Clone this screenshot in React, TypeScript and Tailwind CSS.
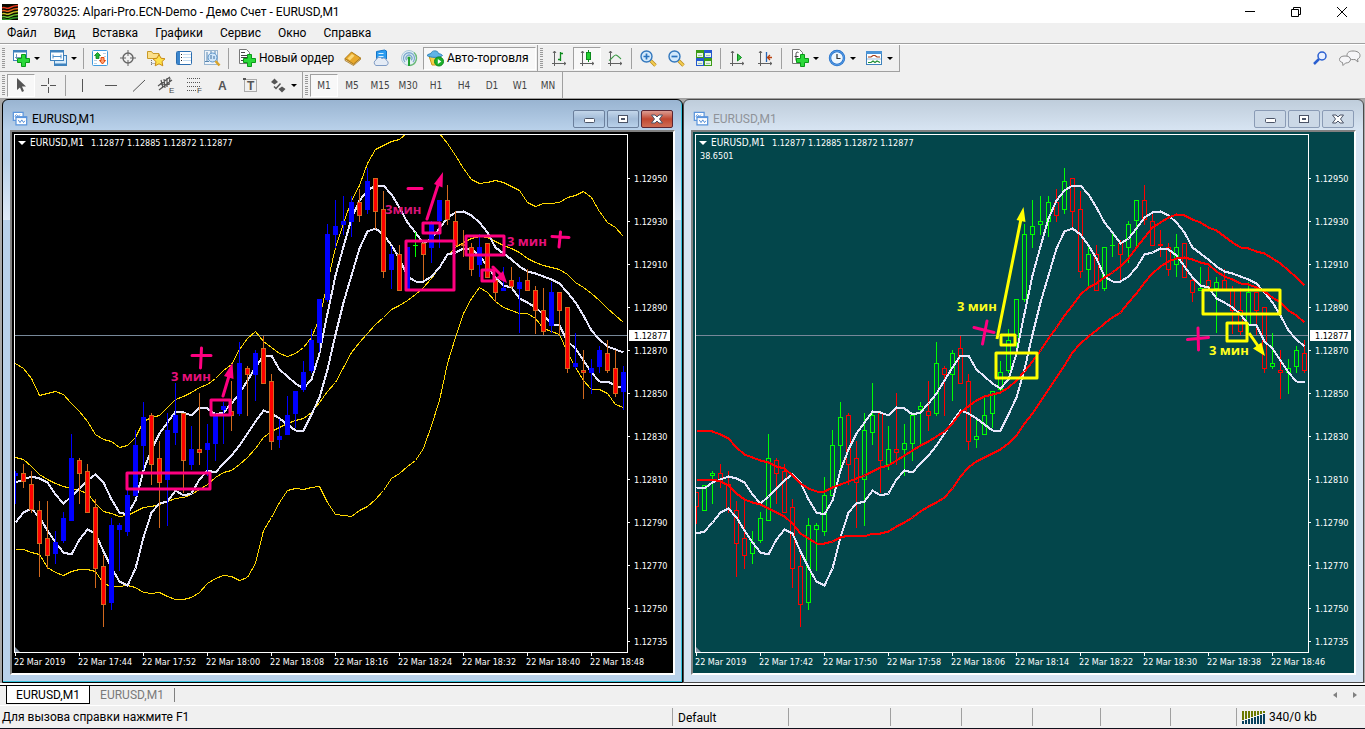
import type { ReactNode } from "react";
import clsx from "clsx";

const UI_FONT = "font-['Roboto','Open_Sans',sans-serif]";
const CHART_FONT = "font-['DejaVu_Sans_Condensed','Open_Sans',sans-serif]";

/* ---------- chart data ---------- */

type Dir = "u" | "d" | "n";
type Candle = [high: number, top: number, bottom: number, low: number, dir: Dir];

// Levels are rows of the terminal window, the canvas begins at row TOP
const TOP = 132;
const STEP = 8;

const OLDER: Candle[] = [
  [492, 492, 507, 524, "d"], [485, 485, 511, 511, "u"],
];

const CANDLES: Candle[] = [
  [471, 473, 476, 504, "u"], [464, 473, 482, 488, "d"], [471, 484, 510, 513, "d"], [501, 510, 544, 577, "d"],
  [501, 538, 556, 569, "d"], [531, 542, 554, 564, "u"], [512, 518, 541, 543, "u"], [434, 458, 521, 521, "u"],
  [458, 460, 474, 504, "d"], [464, 471, 513, 513, "d"], [499, 507, 569, 588, "d"], [555, 566, 605, 627, "d"],
  [518, 525, 603, 610, "u"], [523, 525, 530, 571, "u"], [477, 495, 532, 536, "u"], [430, 445, 496, 496, "u"],
  [402, 417, 446, 470, "u"], [413, 415, 465, 485, "d"], [441, 458, 483, 528, "d"], [413, 430, 480, 526, "u"],
  [383, 415, 433, 445, "u"], [413, 413, 461, 493, "d"], [426, 449, 465, 470, "u"], [393, 449, 453, 465, "d"],
  [424, 443, 450, 476, "u"], [413, 415, 444, 461, "u"], [402, 406, 410, 444, "u"], [381, 411, 416, 431, "d"],
  [342, 363, 414, 416, "u"], [366, 368, 375, 416, "d"], [350, 353, 375, 401, "u"], [336, 348, 384, 384, "d"],
  [374, 381, 442, 450, "d"], [419, 436, 440, 448, "u"], [396, 415, 435, 435, "u"], [391, 391, 414, 428, "u"],
  [361, 372, 390, 392, "u"], [329, 340, 371, 373, "u"], [299, 299, 343, 352, "u"], [224, 234, 300, 302, "u"],
  [200, 226, 235, 248, "u"], [196, 221, 225, 235, "u"], [196, 202, 222, 237, "u"], [189, 202, 216, 222, "d"],
  [168, 181, 210, 214, "u"], [178, 178, 212, 229, "d"], [191, 209, 272, 278, "d"], [246, 254, 270, 289, "u"],
  [245, 254, 291, 291, "d"], [247, 247, 289, 291, "u"], [232, 245, 246, 257, "n"], [240, 243, 255, 280, "d"],
  [221, 224, 248, 263, "u"], [200, 200, 221, 248, "u"], [185, 200, 220, 225, "d"], [211, 221, 246, 246, "d"],
  [230, 244, 246, 257, "d"], [243, 247, 270, 276, "d"], [234, 247, 265, 277, "u"], [243, 243, 278, 278, "d"],
  [278, 280, 293, 302, "d"], [267, 288, 291, 291, "u"], [267, 280, 287, 289, "d"], [277, 282, 289, 333, "u"],
  [269, 280, 291, 291, "d"], [286, 290, 311, 334, "d"], [288, 310, 332, 335, "d"], [282, 292, 326, 333, "u"],
  [292, 292, 311, 335, "d"], [307, 307, 369, 373, "d"], [333, 363, 367, 369, "u"], [350, 370, 373, 399, "d"],
  [359, 368, 373, 394, "u"], [346, 350, 367, 373, "u"], [340, 353, 371, 373, "d"], [350, 368, 394, 397, "d"],
  [366, 372, 392, 410, "u"],
];

const MA_HIGH_OLDER = [487, 488];
const MA_LOW_OLDER = [533, 531];

const MA_HIGH = [
  482, 479, 476, 478, 482, 494, 503, 496, 488, 480, 474, 482, 499, 512, 514, 500, 470, 449, 433, 422,
  411, 412, 415, 407, 408, 414, 412, 403, 393, 380, 367, 355, 355, 369, 376, 383, 388, 379, 353, 313,
  275, 246, 218, 200, 190, 185, 185, 194, 207, 222, 232, 243, 238, 228, 217, 212, 211, 215, 222, 232,
  247, 253, 259, 266, 271, 273, 276, 279, 283, 292, 302, 315, 330, 339, 346, 349, 352,
];

const MA_LOW = [
  522, 512, 508, 517, 530, 542, 552, 554, 539, 529, 533, 551, 567, 581, 585, 568, 537, 512, 503, 501,
  490, 495, 493, 479, 470, 472, 463, 455, 445, 433, 421, 410, 413, 418, 424, 430, 430, 414, 397, 369,
  334, 302, 275, 248, 231, 228, 234, 245, 258, 276, 281, 281, 276, 267, 254, 252, 248, 249, 255, 266,
  277, 285, 287, 298, 302, 307, 314, 324, 325, 341, 348, 360, 372, 381, 381, 385, 388,
];

const BB_UPPER = [
  363, 368, 378, 395, 393, 391, 394, 403, 411, 421, 434, 439, 441, 447, 445, 437, 421, 417, 415, 407,
  399, 396, 392, 387, 384, 378, 370, 364, 349, 338, 331, 341, 347, 353, 356, 353, 347, 337, 318, 282,
  247, 223, 200, 185, 163, 149, 145, 141, 139, 132, 126, 122, 126, 133, 143, 155, 168, 179, 183, 182,
  180, 182, 186, 190, 202, 206, 203, 203, 202, 197, 195, 191, 197, 211, 222, 227, 236,
];

const BB_MIDDLE = [
  457, 459, 466, 474, 479, 483, 486, 488, 490, 493, 503, 511, 513, 516, 515, 511, 507, 506, 504, 501,
  498, 497, 494, 489, 484, 477, 472, 470, 464, 457, 448, 437, 431, 427, 423, 420, 418, 412, 402, 391,
  382, 367, 352, 342, 333, 324, 317, 309, 305, 300, 294, 287, 278, 267, 255, 247, 242, 238, 236, 237,
  241, 245, 248, 252, 258, 262, 265, 267, 269, 274, 282, 287, 293, 300, 308, 315, 322,
];

const BB_LOWER = [
  549, 549, 552, 554, 567, 572, 575, 571, 569, 569, 571, 583, 586, 586, 585, 587, 592, 593, 592, 596,
  599, 599, 597, 592, 583, 578, 575, 576, 580, 577, 563, 530, 517, 502, 490, 488, 489, 487, 486, 502,
  514, 515, 516, 510, 506, 499, 490, 478, 473, 466, 460, 448, 425, 400, 363, 337, 313, 298, 287, 292,
  301, 307, 310, 313, 313, 318, 328, 331, 334, 352, 367, 380, 389, 389, 393, 404, 407,
];

const RED_UPPER = [
  430, 430, 431, 434, 438, 447, 454, 457, 460, 462, 466, 468, 475, 483, 488, 491, 491, 487, 484, 481,
  478, 475, 471, 467, 465, 460, 455, 450, 445, 441, 436, 431, 423, 412, 406, 400, 396, 394, 392, 387,
  380, 371, 361, 350, 338, 327, 315, 305, 294, 287, 283, 277, 272, 266, 258, 247, 237, 227, 222, 217,
  214, 215, 219, 222, 227, 230, 236, 242, 247, 248, 251, 253, 258, 263, 270, 277, 285,
];

const RED_LOWER = [
  479, 479, 479, 481, 485, 493, 499, 502, 504, 508, 512, 516, 523, 533, 538, 543, 543, 541, 537, 535,
  535, 536, 533, 533, 531, 526, 522, 517, 511, 506, 502, 497, 488, 476, 467, 461, 457, 453, 449, 443,
  435, 423, 413, 401, 389, 377, 365, 352, 343, 336, 330, 323, 317, 312, 302, 293, 282, 273, 266, 261,
  258, 257, 259, 262, 264, 271, 276, 279, 283, 284, 287, 291, 297, 302, 310, 315, 322,
];

const PRICES = [
  "1.12950", "1.12930", "1.12910", "1.12890", "1.12870", "1.12850",
  "1.12830", "1.12810", "1.12790", "1.12770", "1.12750",
];

const TIMES_LEFT = ["2019", "17:44", "17:52", "18:00", "18:08", "18:16", "18:24", "18:32", "18:40", "18:48"];
const TIMES_RIGHT = ["2019", "17:42", "17:50", "17:58", "18:06", "18:14", "18:22", "18:30", "18:38", "18:46"];

/* ---------- chart ---------- */

function Line({ data, color, width = 1 }: { data: number[]; color: string; width?: number }) {
  const points = data.map((v, i) => `${3.5 + i * STEP},${v - TOP + 0.5}`).join(" ");
  return <polyline points={points} fill="none" stroke={color} strokeWidth={width} strokeLinejoin="round" />;
}

function SolidCandle({ candle, x }: { candle: Candle; x: number }) {
  const [high, top, bottom, low, dir] = candle;
  const color = dir === "u" ? "#0000ff" : dir === "d" ? "#d2691e" : "#00ff00";
  return (
    <g fill={color}>
      <rect x={x} y={high - TOP} width="1" height={low - high} />
      <rect x={x - 2} y={top - TOP} width="5" height={bottom - top} />
      {dir === "d" && bottom - top > 2 && (
        <rect x={x - 1} y={top - TOP + 1} width="3" height={bottom - top - 2} fill="#ff0000" />
      )}
    </g>
  );
}

function HollowCandle({ candle, x }: { candle: Candle; x: number }) {
  const [high, top, bottom, low, dir] = candle;
  const color = dir === "d" ? "#ff0000" : "#00ff00";
  return (
    <g fill={color}>
      <rect x={x} y={high - TOP} width="1" height={top - high} />
      <rect x={x} y={bottom - TOP} width="1" height={low - bottom} />
      {bottom - top > 1 ? (
        <rect x={x - 1.5} y={top - TOP + 0.5} width="4" height={bottom - top - 1} fill="none" stroke={color} />
      ) : (
        <rect x={x - 2} y={top - TOP} width="5" height="1" />
      )}
    </g>
  );
}

function Frame({ times, extra }: { times: string[]; extra?: string }) {
  return (
    <>
      <g fill="#fff" shapeRendering="crispEdges">
        <rect x="2" y="2" width="614" height="1" />
        <rect x="2" y="2" width="1" height="519" />
        <rect x="615" y="2" width="1" height="519" />
        <rect x="2" y="520" width="614" height="1" />
        {PRICES.map((p, i) => <rect key={p} x="616" y={46 + i * 43} width="2" height="1" />)}
        <rect x="616" y="509" width="2" height="1" />
        {times.map((t, i) => <rect key={t} x={3 + i * 64} y="521" width="1" height="3" />)}
      </g>
      <path d="M3 515l5 5h-5z" fill="#8794a5" />
      <path d="M6 9h8l-4 4z" fill="#fff" />
      <g className={clsx(CHART_FONT, "text-[9px]")} fill="#fff">
        <text x="18" y="14" className="text-[10px]">EURUSD,M1</text>
        <text x="79" y="14">1.12877 1.12885 1.12872 1.12877</text>
        {extra && <text x="7" y="27">{extra}</text>}
        {PRICES.map((p, i) => <text key={p} x="622" y={50 + i * 43}>{p}</text>)}
        <text x="622" y="513">1.12735</text>
        <rect x="617" y="198" width="41" height="11" />
        <text x="622" y="207" fill="#000">1.12877</text>
        {times.map((t, i) => <text key={t} x={2 + i * 64} y="533">{`22 Mar ${t}`}</text>)}
      </g>
    </>
  );
}

function Note({ x, y, fill, children }: { x: number; y: number; fill: string; children: ReactNode }) {
  return (
    <text x={x} y={y} fill={fill} className="font-['Open_Sans',sans-serif] text-[13px] font-bold">
      {children}
    </text>
  );
}

function BollingerChart() {
  return (
    <svg className="block h-full w-full bg-black" role="img" aria-label="EURUSD,M1 Bollinger Bands">
      <clipPath id="plot-left"><rect x="3" y="3" width="612" height="517" /></clipPath>
      <g clipPath="url(#plot-left)" shapeRendering="crispEdges">
        <rect x="3" y="203" width="612" height="1" fill="#778899" />
        <Line data={BB_UPPER} color="#ffd700" />
        <Line data={BB_MIDDLE} color="#ffd700" />
        <Line data={BB_LOWER} color="#ffd700" />
        <Line data={MA_HIGH} color="#e6e6fa" width={2} />
        <Line data={MA_LOW} color="#e6e6fa" width={2} />
        {CANDLES.map((c, i) => <SolidCandle key={i} candle={c} x={3 + i * STEP} />)}
      </g>
      <Frame times={TIMES_LEFT} />
      <g transform="translate(-12 -132)">
        <g fill="none" stroke="#ff0080" strokeWidth="3" strokeLinejoin="round">
          <rect x="127" y="473" width="83" height="16" />
          <rect x="211" y="400" width="19" height="15" />
          <rect x="423" y="223" width="17" height="10" />
          <rect x="406" y="241" width="48" height="49" />
          <rect x="466" y="236" width="38" height="19" />
          <rect x="482" y="270" width="12" height="11" />
          <path d="M223 396l6-20M427 219l11-34M493 267l9 9M408 188.500h14M192 355.500h19M201.500 348l-1 20M552 236.500l17 1M560.500 232l-1.500 15" strokeLinecap="round" />
        </g>
        <path d="M232.500 363l-8.500 13 9.500 3zM443 172l-9 12 8.500 3.500zM507 283l-11-5 7-7z" fill="#ff0080" />
        <Note x={171} y={381} fill="#e8107c">3 мин</Note>
        <Note x={385} y={214} fill="#d81478">3мин</Note>
        <Note x={507} y={246} fill="#e8107c">3 мин</Note>
      </g>
    </svg>
  );
}

function ChannelChart() {
  return (
    <svg className="block h-full w-full bg-[#03464b]" role="img" aria-label="EURUSD,M1 channel">
      <clipPath id="plot-right"><rect x="3" y="3" width="612" height="517" /></clipPath>
      <g clipPath="url(#plot-right)" shapeRendering="crispEdges">
        <rect x="3" y="203" width="612" height="1" fill="#778899" />
        {[...OLDER, ...CANDLES.slice(0, 75)].map((c, i) => <HollowCandle key={i} candle={c} x={3 + i * STEP} />)}
        <Line data={[...MA_HIGH_OLDER, ...MA_HIGH.slice(0, 75)]} color="#e6e6fa" width={2} />
        <Line data={[...MA_LOW_OLDER, ...MA_LOW.slice(0, 75)]} color="#e6e6fa" width={2} />
        <Line data={RED_UPPER} color="#ff0000" width={2} />
        <Line data={RED_LOWER} color="#ff0000" width={2} />
      </g>
      <Frame times={TIMES_RIGHT} extra="38.6501" />
      <g transform="translate(-693 -132)">
        <g fill="none" stroke="#ffff00" strokeWidth="3" strokeLinejoin="round">
          <rect x="1001" y="335" width="14" height="10" />
          <rect x="996" y="353" width="41" height="25" />
          <rect x="1203" y="290" width="77" height="24" />
          <rect x="1227" y="323" width="20" height="18" />
          <path d="M997 339l24-120M1249 333l9 13" />
        </g>
        <path d="M1023.500 207l-7 13 9 2zM1265 356l-12-7.500 8.500-6z" fill="#ffff00" />
        <path
          d="M974 327.500l20 5M987 321l-4.500 23M1187.500 339.500l21-2M1198 328l.5 22"
          stroke="#ff0080"
          strokeWidth="3"
          strokeLinecap="round"
        />
        <Note x={957} y={311} fill="#ffff1e">3 мин</Note>
        <Note x={1209} y={355} fill="#ffff1e">3 мин</Note>
      </g>
    </svg>
  );
}

/* ---------- icons ---------- */

function Icon({ children, size = 18 }: { children: ReactNode; size?: number }) {
  return (
    <svg width={size} height={size} viewBox="0 0 18 18" fill="none" className="shrink-0" aria-hidden="true">
      {children}
    </svg>
  );
}

const GreenPlus = () => (
  <path d="M9.500 5.500h4v4h4v4h-4v4h-4v-4h-4v-4h4z" fill="#2bd93a" stroke="#0a9a18" />
);

const Axes = () => (
  <path d="M4.500 2v15M2 14.500h14M3 4l1.500-2L6 4M14 13l2 1.500-2 1.500" stroke="#606060" />
);

const AddChartIcon = () => (
  <Icon>
    <rect x="1.500" y="1.500" width="13" height="10" fill="#fff" stroke="#3f82bd" />
    <path d="M1 2.500h14" stroke="#3f82bd" strokeWidth="2" />
    <path d="M4.500 5v5M3 8.500h6" stroke="#7397b8" />
    <GreenPlus />
  </Icon>
);

const ProfilesIcon = () => (
  <Icon>
    <rect x="5.500" y="6.500" width="12" height="10" fill="#d9ecfb" stroke="#3f82bd" />
    <rect x="1.500" y="1.500" width="13" height="10" fill="#fff" stroke="#3f82bd" />
    <path d="M1 2.500h14M5 15.500h13" stroke="#3f82bd" strokeWidth="2" />
    <path d="M4 5.500v4M4 7.500h8M12 5.500v4" stroke="#4a8cc8" />
  </Icon>
);

const MarketWatchIcon = () => (
  <Icon>
    <rect x="1.500" y="1.500" width="15" height="15" rx="1" fill="#fff" stroke="#3f9be0" />
    <path d="M12 4.500h3M13 7.500h2M3 11.500h3M3 14.500h3" stroke="#b8cfe2" />
    <path d="M6.500 3.500l3 3H8v3H5v-3H3.500z" fill="#1db835" stroke="#0b7d1a" strokeWidth=".8" />
    <path d="M11.500 15l-3-3.500H10v-3h3v3h1.500z" fill="#ffa070" stroke="#e0480a" />
  </Icon>
);

const TargetIcon = () => (
  <Icon>
    <circle cx="9" cy="9" r="5" stroke="#666" strokeWidth="1.400" />
    <path d="M9 1v6M9 11v6M1 9h6M11 9h6" stroke="#666" />
  </Icon>
);

const NavigatorIcon = () => (
  <Icon>
    <path d="M.500 2.500h4l1.500 2h6v5H.500z" fill="#fbe08a" stroke="#c89a28" />
    <path d="M4.500 11v6M4.500 14.500h4" stroke="#777" strokeDasharray="1 1" />
    <path d="M12 5.500l2 3.700 4 .6-3 2.800.8 4.200-3.800-2-3.800 2 .8-4.200-3-2.800 4-.6z" fill="#fde14a" stroke="#c98a12" />
  </Icon>
);

const DataWindowIcon = () => (
  <Icon>
    <rect x="1.500" y="2.500" width="15" height="13" rx="1" fill="#fff" stroke="#2a6db0" />
    <path d="M2 3h3v12H2z" fill="#3c86cd" />
    <path d="M6 5.500h1M6 8.500h1M6 11.500h1" stroke="#222" />
    <path d="M8 5.500h8M8 8.500h8M8 11.500h8" stroke="#c4dbef" />
  </Icon>
);

const TesterIcon = () => (
  <Icon>
    <rect x="1.500" y="1.500" width="13" height="14" fill="#eef4fa" stroke="#9ab6d0" />
    <path d="M4 3v10M2 12.500h4M8 2v3M12 2v3" stroke="#5886b0" />
    <circle cx="9.500" cy="8.500" r="4.500" fill="#cfe6fa" stroke="#5b93c8" />
    <path d="M8 6v4M11 7v3" stroke="#3f6f9f" />
    <path d="M12.500 12l4 4.500" stroke="#d9a32a" strokeWidth="2.600" />
  </Icon>
);

const NewOrderIcon = () => (
  <Icon>
    <path d="M1.500.500h7l3 3v11h-10z" fill="#fff" stroke="#777" />
    <path d="M3 3.500h4M3 6.500h6M3 8.500h6M3 11.500h4" stroke="#444" />
    <GreenPlus />
  </Icon>
);

const BookIcon = () => (
  <Icon>
    <path d="M1 9.500v2l8.500 5 7-6V9l-7 6z" fill="#e9c98a" stroke="#9a6a14" strokeWidth=".7" />
    <path d="M1 9.500L7.500 3l9 6-7 6z" fill="#e8a92c" stroke="#b07d18" />
    <path d="M3.500 9.500L8 5l2.500 1.800-4.500 4.400z" fill="#fbd878" />
  </Icon>
);

const CloudIcon = () => (
  <Icon>
    <path d="M4.500 2.500l8-1.500 2 1v8h-10z" fill="#2c9cf0" stroke="#1576c8" />
    <path d="M6.500 4.500h5M6.500 7.500h5" stroke="#d8f0ff" />
    <path d="M4 16.500a3 3 0 010-5.500 3.500 3.500 0 016-1.500 3 3 0 014.500 2 2.600 2.600 0 01-.5 5z" fill="#e4ebf5" stroke="#7f9bc4" />
  </Icon>
);

const SignalIcon = () => (
  <Icon>
    <circle cx="9" cy="9" r="7.500" fill="#e4eff4" stroke="#a9c9d8" />
    <path d="M5 13a5.500 5.500 0 118 0M6.800 11.200a3 3 0 114.400 0" stroke="#7da9cf" strokeWidth="1.300" />
    <path d="M10 16.500A7.500 7.500 0 0014 3.500" stroke="#6dbb78" strokeWidth="1.300" />
    <circle cx="9" cy="9" r="1.600" fill="#22a035" />
    <path d="M9 10v7" stroke="#22a035" strokeWidth="2" />
  </Icon>
);

const AutoTradeIcon = () => (
  <Icon>
    <path d="M3 7l3 9h6l3-9z" fill="#f6cf48" stroke="#c99a1c" />
    <path d="M1 6.500c1-1.500 3-1.500 4-2C5.500 1 12 1 12.500 4.500c1.500.5 3 .5 4 2-3 2.500-12 2.500-15.500 0z" fill="#5fb3e6" stroke="#2d83ba" />
    <circle cx="13" cy="12.500" r="4.500" fill="#1cb02b" stroke="#0f8a1c" />
    <path d="M11.800 10l3.500 2.500-3.500 2.500z" fill="#fff" />
  </Icon>
);

const BarsIcon = () => (
  <Icon>
    <Axes />
    <path d="M10.500 3v9M8 10.500h2M11 4.500h2" stroke="#0c8a1c" strokeWidth="1.300" />
  </Icon>
);

const CandlesIcon = () => (
  <Icon>
    <Axes />
    <path d="M10.500 1v12" stroke="#0c8a1c" />
    <rect x="8.500" y="3.500" width="4" height="7" fill="#22d030" stroke="#0c8a1c" />
  </Icon>
);

const LineChartIcon = () => (
  <Icon>
    <Axes />
    <path d="M3 11.500C6 10 8 5.500 10 6s3 2.500 5 4" stroke="#3c9a46" strokeWidth="1.200" />
  </Icon>
);

const ZoomIcon = ({ plus }: { plus?: boolean }) => (
  <Icon>
    <path d="M11.500 11.500l5 5" stroke="#b98a1e" strokeWidth="3.400" />
    <path d="M11.500 11.500l5 5" stroke="#f3ce52" strokeWidth="1.800" />
    <circle cx="7.500" cy="7.500" r="5.500" fill="#d3e9fb" stroke="#3478bd" strokeWidth="1.400" />
    <path d={plus ? "M4.500 7.500h6M7.500 4.500v6" : "M4.500 7.500h6"} stroke="#2a73bf" strokeWidth="1.700" />
  </Icon>
);

const TileIcon = () => (
  <Icon>
    <path d="M1 1h8v8H1zM9 9h8v8H9z" fill="#3b9b17" />
    <path d="M9 1h8v8H9zM1 9h8v8H1z" fill="#2458d0" />
    <path d="M2 4h6v4H2zM10 4h6v4h-6zM2 12h6v4H2zM10 12h6v4h-6z" fill="#e9f5e4" />
    <path d="M3 6.500h4M11 6.500h4M3 14.500h4M11 14.500h4" stroke="#9fc0b8" />
  </Icon>
);

const AutoScrollIcon = () => (
  <Icon>
    <Axes />
    <path d="M9.500 5l4 3.500-4 3.500z" fill="#35c845" stroke="#0c8a1c" />
  </Icon>
);

const ShiftIcon = () => (
  <Icon>
    <Axes />
    <path d="M10.500 3v10" stroke="#2465b5" strokeWidth="1.300" />
    <path d="M16 8.500h-4M14 6l-2.500 2.500L14 11" stroke="#b8400e" strokeWidth="1.300" />
  </Icon>
);

const IndicatorsIcon = () => (
  <Icon>
    <path d="M1.500.500h7l3 3v11h-10z" fill="#fff" stroke="#777" />
    <path d="M7.500 3.500c-2-1-2.500 0-2.500 2v6M3.500 7.500h4" stroke="#444" />
    <GreenPlus />
  </Icon>
);

const ClockIcon = () => (
  <Icon>
    <circle cx="9" cy="9" r="7" fill="#eef6fd" stroke="#1e6cc8" strokeWidth="2.400" />
    <circle cx="9" cy="9" r="7" stroke="#6fb0f0" strokeWidth=".8" />
    <path d="M9 5v4.500h3.500" stroke="#333" strokeWidth="1.200" />
  </Icon>
);

const TemplateIcon = () => (
  <Icon>
    <rect x="1.500" y="2.500" width="15" height="13" fill="#fff" stroke="#3f82bd" />
    <path d="M1 3.500h16" stroke="#4b94d6" strokeWidth="3" />
    <path d="M2 10h14" stroke="#9fc0dc" />
    <path d="M3 8h3l2-1.500h2L12 8h3" stroke="#a33a14" strokeWidth="1.200" />
    <path d="M3 13.500h3l2-1.500 2 1.500 2-1.500 3 1.500" stroke="#1f8f34" strokeWidth="1.200" />
  </Icon>
);

const CursorIcon = () => (
  <Icon><path d="M5 2v12l3-2.500 2 4.500 2-1-2-4.500h4z" fill="#555" /></Icon>
);
const CrosshairIcon = () => (
  <Icon><path d="M8.500 2v6M8.500 11v6M1 9.500h6M10 9.500h6" stroke="#555" /></Icon>
);
const VLineIcon = () => <Icon><path d="M9.500 3v13" stroke="#555" /></Icon>;
const HLineIcon = () => <Icon><path d="M4 9.500h12" stroke="#555" /></Icon>;
const TrendIcon = () => <Icon><path d="M4 15.500L16 4" stroke="#555" /></Icon>;

const ChannelIcon = () => (
  <Icon>
    <path d="M1 10l12-9M2 14L15 4M4 4l2 8M7 3l1 9M10 2v9M3 8l9 .500M13 2l-1 7" stroke="#555" strokeWidth="1.200" />
    <text x="12" y="17" fill="#444" className="font-['Liberation_Sans',sans-serif] text-[8px] leading-none">E</text>
  </Icon>
);

const FiboIcon = () => (
  <Icon>
    <path d="M2 2.500h14M2 6.500h14M2 10.500h14M2 14.500h9" stroke="#555" strokeDasharray="1 1" />
    <text x="12" y="17" fill="#444" className="font-['Liberation_Sans',sans-serif] text-[8px] leading-none">F</text>
  </Icon>
);

const TextIcon = () => (
  <Icon>
    <text x="5" y="14" fill="#555" className="font-['Liberation_Sans',sans-serif] text-[12px] font-bold">A</text>
  </Icon>
);

const LabelIcon = () => (
  <Icon>
    <rect x="3.500" y="3.500" width="12" height="12" stroke="#666" strokeDasharray="1 1" />
    <path d="M2 2h3v2H2z" fill="#555" />
    <text x="6" y="14" fill="#555" className="font-['Liberation_Sans',sans-serif] text-[12px] font-bold">T</text>
  </Icon>
);

const ArrowsIcon = () => (
  <Icon>
    <path d="M5.500 2.500L9 6 5.500 8.500 2 6zM13 16.500L9.500 13l3.500-2.500 3.500 2.500z" fill="#555" />
    <path d="M5 10.500l2 2 4.500-5" stroke="#555" strokeWidth="1.500" />
  </Icon>
);

const WindowIcon = () => (
  <Icon size={16}>
    <path d="M1.500 1.500h11v9h-11z" fill="#fff" stroke="#5b95dc" strokeWidth="1.400" />
    <path d="M3 6l2-2 2 2 2-2" stroke="#5b95dc" />
    <path d="M4.500 6.500h12v9h-12z" fill="#fff" stroke="#5b95dc" strokeWidth="1.400" />
    <path d="M4 7h13" stroke="#5b95dc" strokeWidth="2" />
    <path d="M7 10l2 3 2-3 2 3 1.500-2" stroke="#3f7fd0" />
  </Icon>
);

const LogoIcon = () => (
  <svg width="16" height="16" viewBox="0 0 16 16" aria-hidden="true">
    <rect width="16" height="16" fill="#0a0a00" />
    <g fill="none" strokeWidth="1.500">
      <path d="M0 4c3-2 4 1.500 7 0s5-2.500 9-2.500" stroke="#f03a20" />
      <path d="M0 7c3-2 4 1.500 7 0s5-2.500 9-2.500" stroke="#e86420" />
      <path d="M0 10c3-2 4 1.500 7 0s5-2.500 9-2.500" stroke="#c8c428" />
      <path d="M0 13c3-2 4 1.500 7 0s5-2.500 9-2.500" stroke="#6cc832" />
      <path d="M0 15.500c3-2 4 1.500 7 0s5-2 9-2" stroke="#2f9a28" />
    </g>
  </svg>
);

/* ---------- toolbar parts ---------- */

const PRESSED = "border border-[#a0a0a0] border-r-white border-b-white bg-[#f8f8f8]";

function Tool({ label, pressed, menu, children }: { label: string; pressed?: boolean; menu?: boolean; children: ReactNode }) {
  return (
    <button
      type="button"
      aria-label={label}
      aria-pressed={pressed}
      className={clsx(
        "flex h-[23px] shrink-0 items-center justify-center",
        menu ? "w-[37px] gap-1" : "w-7",
        pressed && PRESSED,
      )}
    >
      {children}
      {menu && <Caret />}
    </button>
  );
}

const Caret = () => (
  <svg width="6" height="3" viewBox="0 0 6 3" aria-hidden="true"><path d="M0 0h6L3 3z" fill="#000" /></svg>
);

const Divider = () => <div className="mx-0.5 h-[21px] w-px shrink-0 bg-[#a0a0a0]" />;

const Grip = () => (
  <div className="mx-0.5 flex h-5 w-[3px] shrink-0 flex-col justify-between">
    {Array.from({ length: 10 }, (_, i) => <span key={i} className="h-px bg-[#999]" />)}
  </div>
);

const MENU = ["Файл", "Вид", "Вставка", "Графики", "Сервис", "Окно", "Справка"];
const PERIODS = ["M1", "M5", "M15", "M30", "H1", "H4", "D1", "W1", "MN"];

function TitleBar() {
  return (
    <header className="flex h-[23px] items-center bg-white pl-0.5">
      <LogoIcon />
      <h1 className="flex-1 pl-[5px] text-[12px] leading-4">29780325: Alpari-Pro.ECN-Demo - Демо Счет - EURUSD,M1</h1>
      <button type="button" aria-label="Свернуть" className="flex h-full w-[46px] items-center justify-center">
        <svg width="10" height="10"><path d="M0 4.500h10" stroke="#000" /></svg>
      </button>
      <button type="button" aria-label="Развернуть" className="flex h-full w-[46px] items-center justify-center">
        <svg width="10" height="10" fill="none" stroke="#000"><path d="M.500 2.500h7v7h-7zM2.500 2V.500h7v7H8" /></svg>
      </button>
      <button type="button" aria-label="Закрыть" className="flex h-full w-[46px] items-center justify-center">
        <svg width="10" height="10" stroke="#000"><path d="M0 0l10 10M10 0L0 10" /></svg>
      </button>
    </header>
  );
}

function MainToolbar() {
  return (
    <div className="flex h-[27px]">
      <div className="flex items-center border-r border-b border-[#a0a0a0] pr-px">
        <Grip />
        <Tool label="Новый график" menu><AddChartIcon /></Tool>
        <Tool label="Профили" menu><ProfilesIcon /></Tool>
        <Divider />
        <Tool label="Обзор рынка"><MarketWatchIcon /></Tool>
        <Tool label="Перекрестие"><TargetIcon /></Tool>
        <Tool label="Навигатор"><NavigatorIcon /></Tool>
        <Tool label="Терминал"><DataWindowIcon /></Tool>
        <Tool label="Тестер стратегий"><TesterIcon /></Tool>
        <Divider />
        <button type="button" className="flex h-[23px] w-[108px] items-center gap-[3px] pl-[7px] text-[12px]">
          <NewOrderIcon />
          <span className="whitespace-nowrap">Новый ордер</span>
        </button>
        <Tool label="MetaEditor"><BookIcon /></Tool>
        <Tool label="Облако"><CloudIcon /></Tool>
        <Tool label="Сигналы"><SignalIcon /></Tool>
        <button
          type="button"
          aria-pressed="true"
          className={clsx("flex h-[23px] w-[113px] items-center gap-[3px] pl-0.5 text-[12px]", PRESSED)}
        >
          <AutoTradeIcon />
          <span className="whitespace-nowrap">Авто-торговля</span>
        </button>
      </div>
      <div className="flex items-center border-r border-b border-[#a0a0a0] pr-0.5">
        <Grip />
        <Tool label="Бары"><BarsIcon /></Tool>
        <Tool label="Свечи" pressed><CandlesIcon /></Tool>
        <Tool label="Линия"><LineChartIcon /></Tool>
        <Divider />
        <Tool label="Увеличить"><ZoomIcon plus /></Tool>
        <Tool label="Уменьшить"><ZoomIcon /></Tool>
        <Tool label="Окна мозаикой"><TileIcon /></Tool>
        <Divider />
        <Tool label="Автопрокрутка"><AutoScrollIcon /></Tool>
        <Tool label="Сдвиг графика"><ShiftIcon /></Tool>
        <Divider />
        <div className="flex pl-0.5">
          <Tool label="Индикаторы" menu><IndicatorsIcon /></Tool>
          <Tool label="Периоды" menu><ClockIcon /></Tool>
          <Tool label="Шаблоны" menu><TemplateIcon /></Tool>
        </div>
      </div>
    </div>
  );
}

function DrawToolbar() {
  return (
    <div className="flex h-[26px]">
      <div className="flex items-center border-r border-[#a0a0a0] pr-px">
        <Grip />
        <Tool label="Курсор" pressed><CursorIcon /></Tool>
        <Tool label="Перекрестие"><CrosshairIcon /></Tool>
        <Divider />
        <Tool label="Вертикальная линия"><VLineIcon /></Tool>
        <Tool label="Горизонтальная линия"><HLineIcon /></Tool>
        <Tool label="Трендовая линия"><TrendIcon /></Tool>
        <Tool label="Канал"><ChannelIcon /></Tool>
        <Tool label="Фибоначчи"><FiboIcon /></Tool>
        <Tool label="Текст"><TextIcon /></Tool>
        <Tool label="Метка"><LabelIcon /></Tool>
        <Tool label="Стрелки" menu><ArrowsIcon /></Tool>
      </div>
      <div className="flex items-center border-r border-[#a0a0a0]">
        <Grip />
        {PERIODS.map((p, i) => (
          <button
            key={p}
            type="button"
            aria-pressed={i === 0}
            className={clsx("h-[23px] w-7 text-[10px] text-[#444]", CHART_FONT, i === 0 && PRESSED)}
          >
            {p}
          </button>
        ))}
      </div>
    </div>
  );
}

/* ---------- chart windows ---------- */

function ControlButton({ label, danger, active, children }: { label: string; danger?: boolean; active?: boolean; children: ReactNode }) {
  return (
    <button
      type="button"
      aria-label={label}
      className={clsx(
        "flex h-[18px] w-8 items-center justify-center rounded-[2px] border",
        danger && active
          ? "border-[#5a2430] bg-linear-to-b from-[#dc9c92] via-[#c0462f] to-[#cf6d55]"
          : active
            ? "border-[#6b7f9c] bg-linear-to-b from-[#c3d6ea] via-[#a3bcd8] to-[#b9d1ea]"
            : "border-[#8a9bb5] bg-[#cbd8e6]",
      )}
    >
      <svg width="14" height="10" viewBox="0 0 14 10" fill="#fff" stroke="#4a5366" aria-hidden="true">{children}</svg>
    </button>
  );
}

function ChartWindow({ title, active, children }: { title: string; active?: boolean; children: ReactNode }) {
  return (
    <section
      className={clsx(
        "flex min-w-0 flex-1 flex-col rounded-t-[6px] border px-[7px] pb-[7px]",
        active
          ? "border-black bg-[linear-gradient(#99b4d1_0px,#b9d1ea_30px,#b9d1ea_60px,#dfeaf6_120px,#b9d1ea_120px)] shadow-[inset_-1px_-1px_0_#35c3dc]"
          : "border-[#4a4a4a] bg-[linear-gradient(#bfcddb_0px,#d7e4f2_30px)]",
      )}
    >
      <div className="flex h-[30px] items-center gap-0.5 pt-[7px] pr-0.5">
        <span className="flex flex-1 items-center gap-1 pl-0.5">
          <WindowIcon />
          <h2 className={clsx("text-[12px] leading-4", active ? "text-black" : "text-[#8f9399]")}>{title}</h2>
        </span>
        <ControlButton label="Свернуть" active={active}><rect x="2.500" y="4.500" width="10" height="4" rx="1" /></ControlButton>
        <ControlButton label="Развернуть" active={active}>
          <rect x="2.500" y="1.500" width="9" height="7" />
          <rect x="5.500" y="4.500" width="3" height="1" />
        </ControlButton>
        <ControlButton label="Закрыть" active={active} danger>
          <path d="M1.500 1h3.500l2 2 2-2h3.500L9.500 5l3 4H9L7 7 5 9H1.500l3-4z" />
        </ControlButton>
      </div>
      <div className="min-h-0 flex-1 border-2 border-t-[#808080] border-r-white border-b-white border-l-[#808080]">
        {children}
      </div>
    </section>
  );
}

function StatusBar() {
  return (
    <footer className="flex h-[24px] items-center border-t border-b border-t-white border-b-[#10101c] text-[12px] leading-5">
      <p className="flex-1 pl-0.5">Для вызова справки нажмите F1</p>
      <div className="h-[18px] w-[116px] border-l border-[#a0a0a0] pl-[5px]">Default</div>
      <div className="h-[18px] w-[102px] border-l border-[#a0a0a0]" />
      <div className="h-[18px] w-[71px] border-l border-[#a0a0a0]" />
      <div className="h-[18px] w-[71px] border-l border-[#a0a0a0]" />
      <div className="h-[18px] w-[68px] border-l border-[#a0a0a0]" />
      <div className="h-[18px] w-[70px] border-l border-[#a0a0a0]" />
      <div className="h-[18px] w-[66px] border-l border-[#a0a0a0]" />
      <div className="flex h-[18px] w-[129px] items-center gap-1 border-l border-[#a0a0a0] pl-[5px]">
        <svg width="23" height="13" shapeRendering="crispEdges" aria-hidden="true">
          {Array.from({ length: 8 }, (_, i) => (
            <g key={i}>
              <rect x={i * 3} y="0" width="2" height={9 - i} fill="#6b7a00" />
              <rect x={i * 3} y={10 - i} width="2" height={3 + i} fill="#06405c" />
            </g>
          ))}
        </svg>
        <span>340/0 kb</span>
      </div>
    </footer>
  );
}

export default function App() {
  return (
    <div className={clsx("flex h-screen flex-col overflow-hidden bg-[#f0f0f0] text-black", UI_FONT)}>
      <TitleBar />
      <nav className="flex h-[21px] items-center gap-[17px] border-b border-[#a0a0a0] pl-[7px] text-[12px] leading-4">
        {MENU.map((item) => (
          <button key={item} type="button">{item}</button>
        ))}
      </nav>
      <div className="flex border-t border-b border-t-white border-b-[#a0a0a0]">
        <div className="flex-1">
          <MainToolbar />
          <DrawToolbar />
        </div>
        <div className="flex h-[26px] items-center gap-3 pr-1">
          <button type="button" aria-label="Поиск">
            <svg width="14" height="14" fill="none" aria-hidden="true">
              <path d="M1 13l5-5" stroke="#2a5fd0" strokeWidth="2.500" />
              <circle cx="9" cy="5" r="4" fill="#eaf1ff" stroke="#2a5fd0" strokeWidth="1.500" />
            </svg>
          </button>
          <button type="button" aria-label="Сообщения">
            <svg width="22" height="16" fill="#f6f6f8" stroke="#8a8a8a" aria-hidden="true">
              <path d="M14 1c4 0 7 1.500 7 4.500 0 2-1 3-2.500 3.500l.5 3-3-2.500c-5 .5-8-1-8-4S10 1 14 1z" />
              <path d="M6 6c3 0 5.500 1 5.500 3.500S9 13 6.500 13L4 15.500l-.5-3C1.500 12 .500 11 .500 9.500.500 7 3 6 6 6z" />
            </svg>
          </button>
        </div>
      </div>
      <main className="flex min-h-0 flex-1 border-b-2 border-b-white bg-[#a8a8a8] pr-px pl-0.5">
        <ChartWindow title="EURUSD,M1" active><BollingerChart /></ChartWindow>
        <ChartWindow title="EURUSD,M1"><ChannelChart /></ChartWindow>
      </main>
      <div className="flex h-5 items-start border-t border-black pl-1.5 text-[12px]">
        <button type="button" className="h-[18px] w-[84px] border-r border-b border-l border-black bg-white leading-4">
          EURUSD,M1
        </button>
        <button type="button" className="h-[18px] w-[84px] leading-4 text-[#7a7a7a]">EURUSD,M1</button>
        <span className="mt-0.5 h-3.5 w-px bg-[#808080]" />
        <span className="flex-1" />
        <button type="button" aria-label="Назад" className="mt-1.5 mr-4">
          <svg width="4" height="6" className="block"><path d="M4 0v6L0 3z" fill="#808080" /></svg>
        </button>
        <button type="button" aria-label="Вперед" className="mt-1.5 mr-2">
          <svg width="4" height="6" className="block"><path d="M0 0v6l4-3z" fill="#808080" /></svg>
        </button>
      </div>
      <StatusBar />
    </div>
  );
}
